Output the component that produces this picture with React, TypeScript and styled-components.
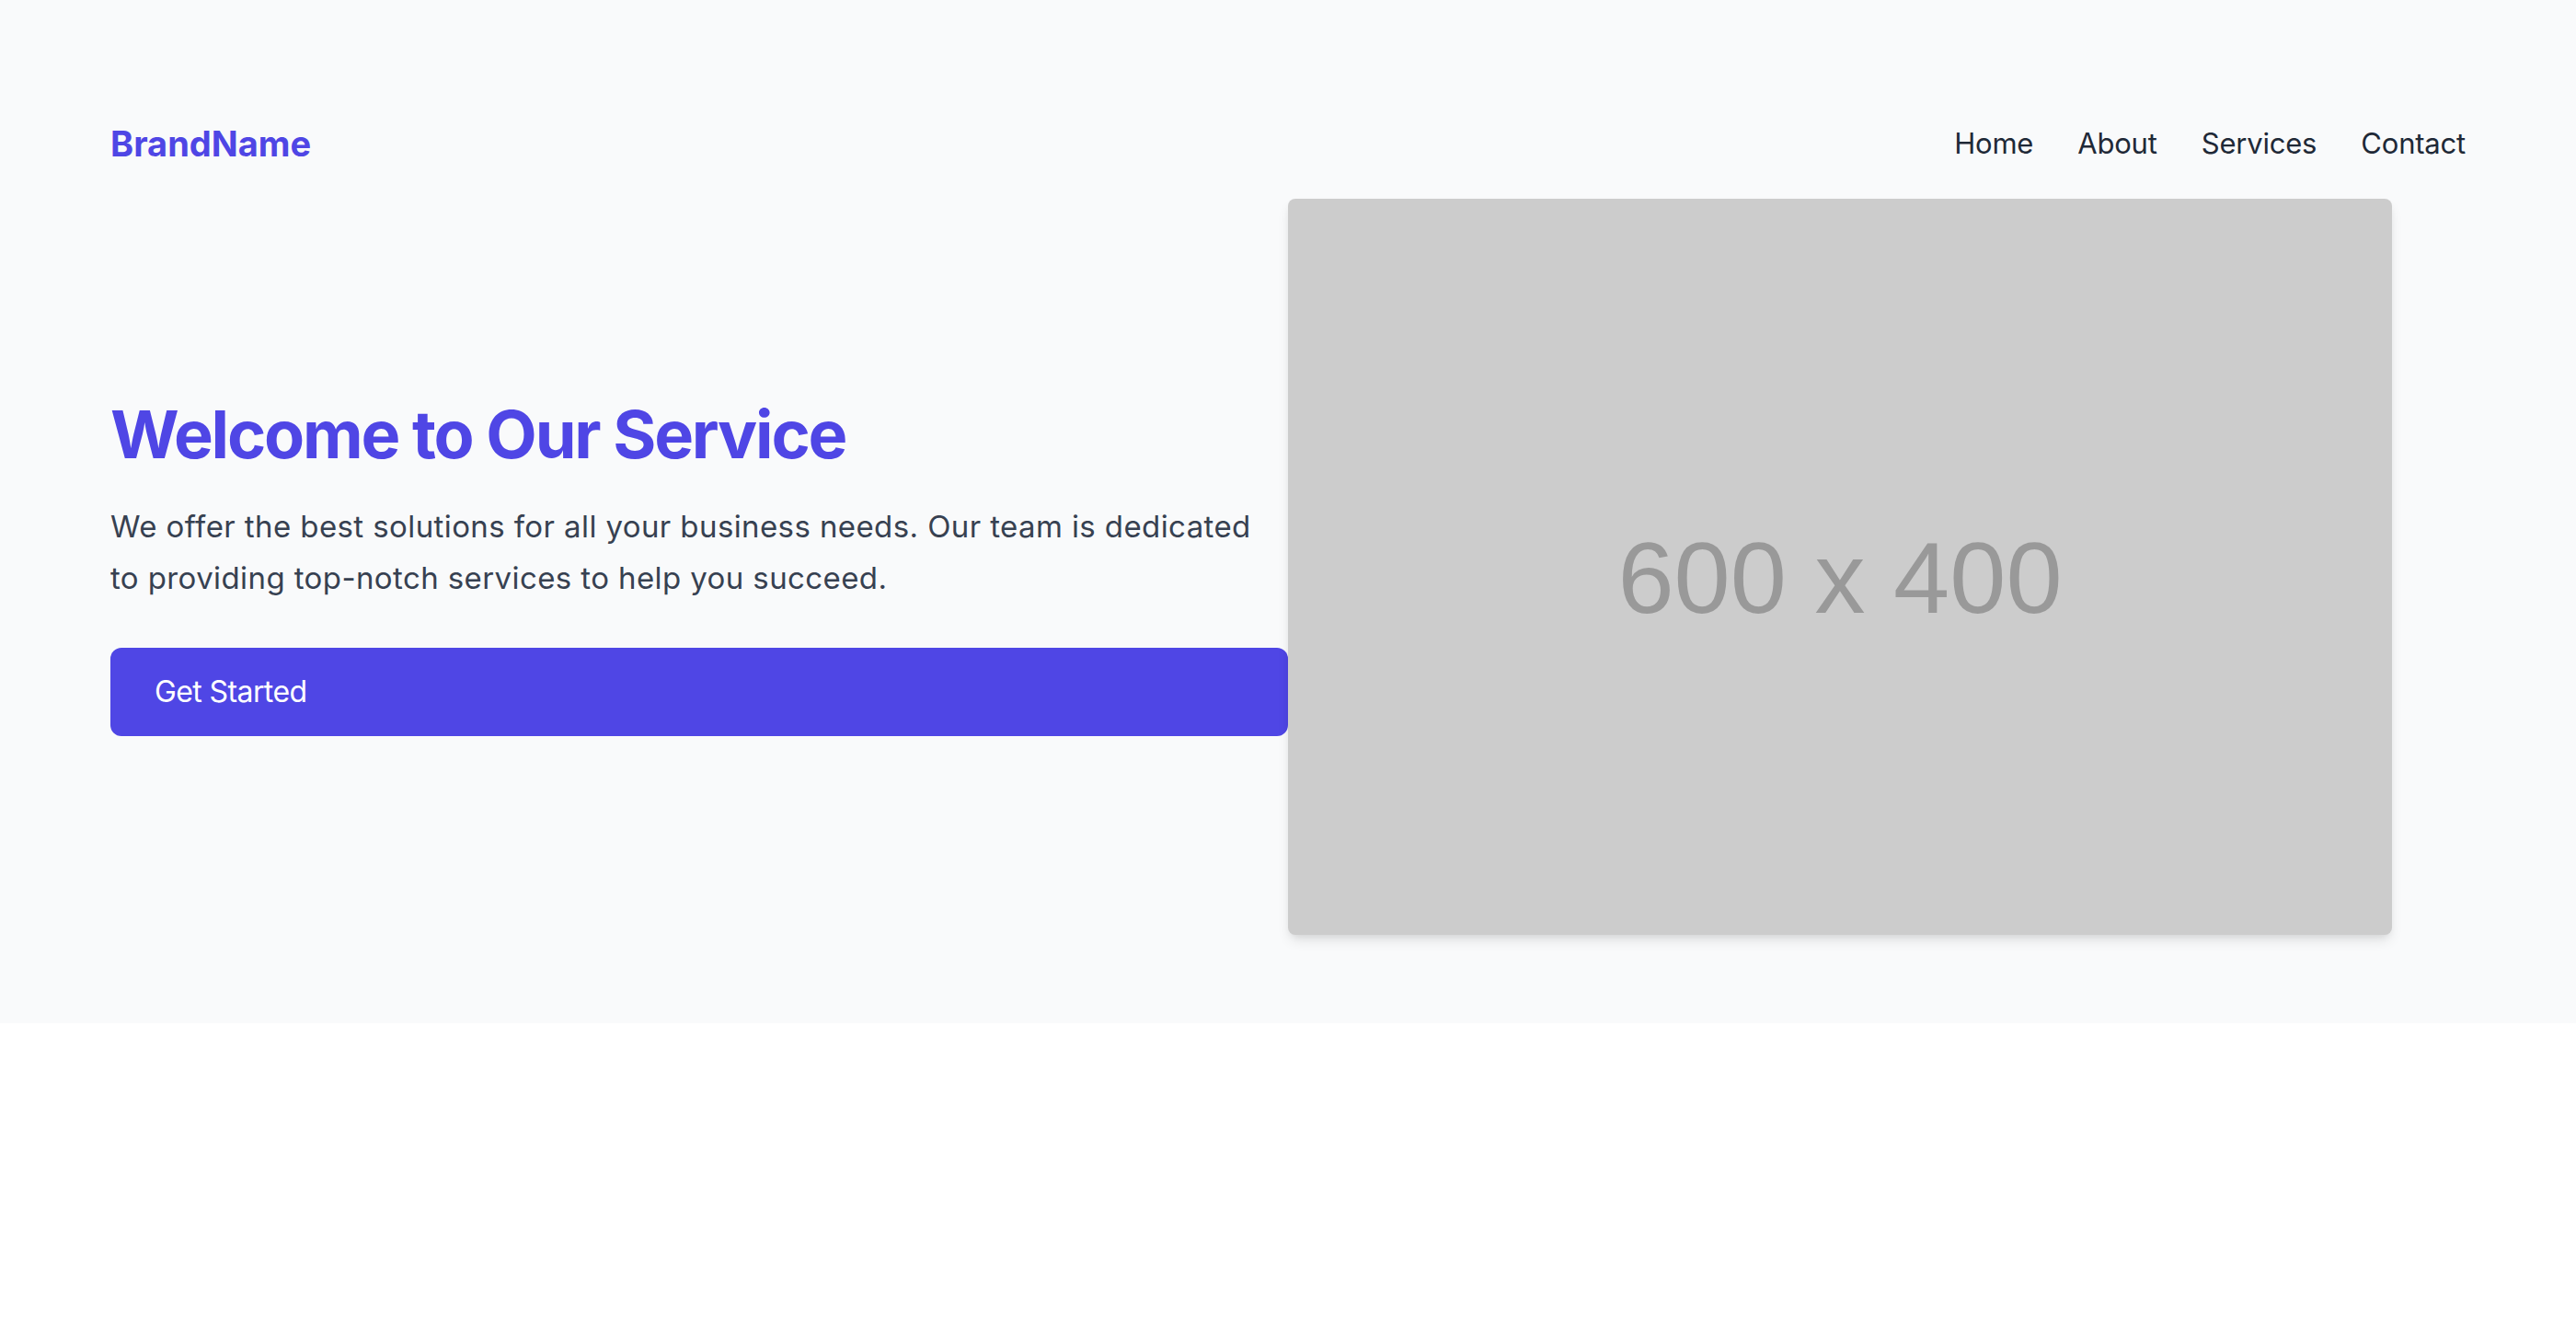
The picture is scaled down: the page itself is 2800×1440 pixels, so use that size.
import React from "react";
import styled, { createGlobalStyle } from "styled-components";

const GlobalStyle = createGlobalStyle`
  html, body { margin: 0; padding: 0; background: #ffffff; }
  body { font-family: Inter, "Noto Sans", "Liberation Sans", sans-serif; }
  * { box-sizing: border-box; }
`;

const Section = styled.section`
  background: #f9fafb;
  padding: 96px 120px;
  display: flex;
  flex-direction: column;
`;

const Header = styled.header`
  height: 120px;
  display: flex;
  align-items: center;
  justify-content: space-between;
`;

const Brand = styled.a`
  font-size: 38px;
  font-weight: 700;
  color: #4f46e5;
  text-decoration: none;
  line-height: 56px;
`;

const Nav = styled.nav`
  display: flex;
  gap: 48px;
`;

const NavLink = styled.a`
  font-size: 31px;
  line-height: 48px;
  letter-spacing: -0.2px;
  color: #1f2937;
  text-decoration: none;
`;

const Hero = styled.div`
  display: flex;
  align-items: center;
`;

const Column = styled.div`
  width: 50%;
  display: flex;
  flex-direction: column;
`;

const Title = styled.h1`
  margin: 0 0 32px;
  font-size: 72px;
  line-height: 1.1;
  font-weight: 700;
  letter-spacing: -2.2px;
  color: #4f46e5;
`;

const Lead = styled.p`
  margin: 0 0 48px;
  font-size: 33px;
  line-height: 56px;
  letter-spacing: 0.4px;
  color: #374151;
`;

const Button = styled.button`
  width: 100%;
  text-align: left;
  border: none;
  background: #4f46e5;
  color: #ffffff;
  font-family: inherit;
  font-size: 32px;
  line-height: 48px;
  letter-spacing: -0.6px;
  padding: 24px 48px;
  border-radius: 12px;
  cursor: pointer;
`;

const Placeholder = styled.div`
  width: 1200px;
  height: 800px;
  background: #cccccc;
  border-radius: 8px;
  box-shadow: 0 8px 14px -2px rgba(0, 0, 0, 0.1), 0 4px 8px -4px rgba(0, 0, 0, 0.1);
  display: flex;
  align-items: center;
  justify-content: center;
  padding-top: 22px;
`;

const PlaceholderText = styled.span`
  font-family: "Liberation Sans", Arial, sans-serif;
  font-size: 110px;
  color: #999999;
  filter: blur(0.7px);
`;

export default function App() {
  return (
    <>
      <GlobalStyle />
      <Section>
        <Header>
          <Brand href="#">BrandName</Brand>
          <Nav>
            <NavLink href="#">Home</NavLink>
            <NavLink href="#">About</NavLink>
            <NavLink href="#">Services</NavLink>
            <NavLink href="#">Contact</NavLink>
          </Nav>
        </Header>
        <Hero>
          <Column>
            <Title>Welcome to Our Service</Title>
            <Lead>
              We offer the best solutions for all your business needs. Our team is
              dedicated to providing top-notch services to help you succeed.
            </Lead>
            <Button>Get Started</Button>
          </Column>
          <Column>
            <Placeholder>
              <PlaceholderText>600 x 400</PlaceholderText>
            </Placeholder>
          </Column>
        </Hero>
      </Section>
    </>
  );
}
